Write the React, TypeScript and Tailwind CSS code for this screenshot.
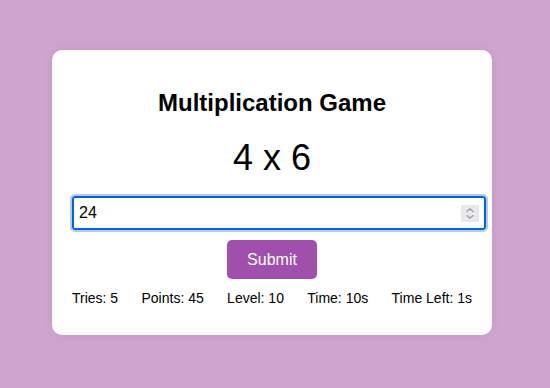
import React from "react";

export default function App() {
  return (
    <div
      className="min-h-screen bg-[#cfa5cf] flex items-start pt-[50px]"
      style={{ fontFamily: '"Liberation Sans", Arial, sans-serif' }}
    >
      <div className="ml-[52px] w-[440px] bg-white rounded-[10px] p-5 text-center text-black shadow-[0_0_10px_rgba(0,0,0,0.08)]">
        <h2 className="mt-[19px] mb-5 text-[24px] leading-[27.6px] font-bold">Multiplication Game</h2>
        <p className="mb-[18px] text-[36px] leading-[41.4px]">4 x 6</p>
        <div className="w-[414px] h-[34px] flex items-center border-2 border-[#0064e0] rounded-[3px] outline-2 outline-[#b8caf0] outline-offset-0 bg-white">
          <input
            readOnly
            value="24"
            className="flex-1 min-w-0 pl-[5px] text-[16px] leading-[18.4px] bg-transparent outline-none text-black"
            style={{ fontFamily: '"Liberation Sans", Arial, sans-serif' }}
          />
          <div className="mr-[5px] w-[18px] h-[17px] bg-[#e9e9ed] flex items-center justify-center">
            <svg width="10" height="13" viewBox="0 0 10 13" fill="none" stroke="#9a9aa0" strokeWidth="1.2" strokeLinecap="round" strokeLinejoin="round">
              <path d="M2 4.5 L5 1.8 L8 4.5" />
              <path d="M2 8.5 L5 11.2 L8 8.5" />
            </svg>
          </div>
        </div>
        <button className="mt-[10px] px-5 py-[10px] bg-[#a14fad] text-white text-[16px] leading-[19px] rounded-[5px]">
          Submit
        </button>
        <div className="mt-[11px] mb-[9px] flex justify-between text-[14px] leading-[16.1px]">
          <span>Tries: 5</span>
          <span>Points: 45</span>
          <span>Level: 10</span>
          <span>Time: 10s</span>
          <span>Time Left: 1s</span>
        </div>
      </div>
    </div>
  );
}
